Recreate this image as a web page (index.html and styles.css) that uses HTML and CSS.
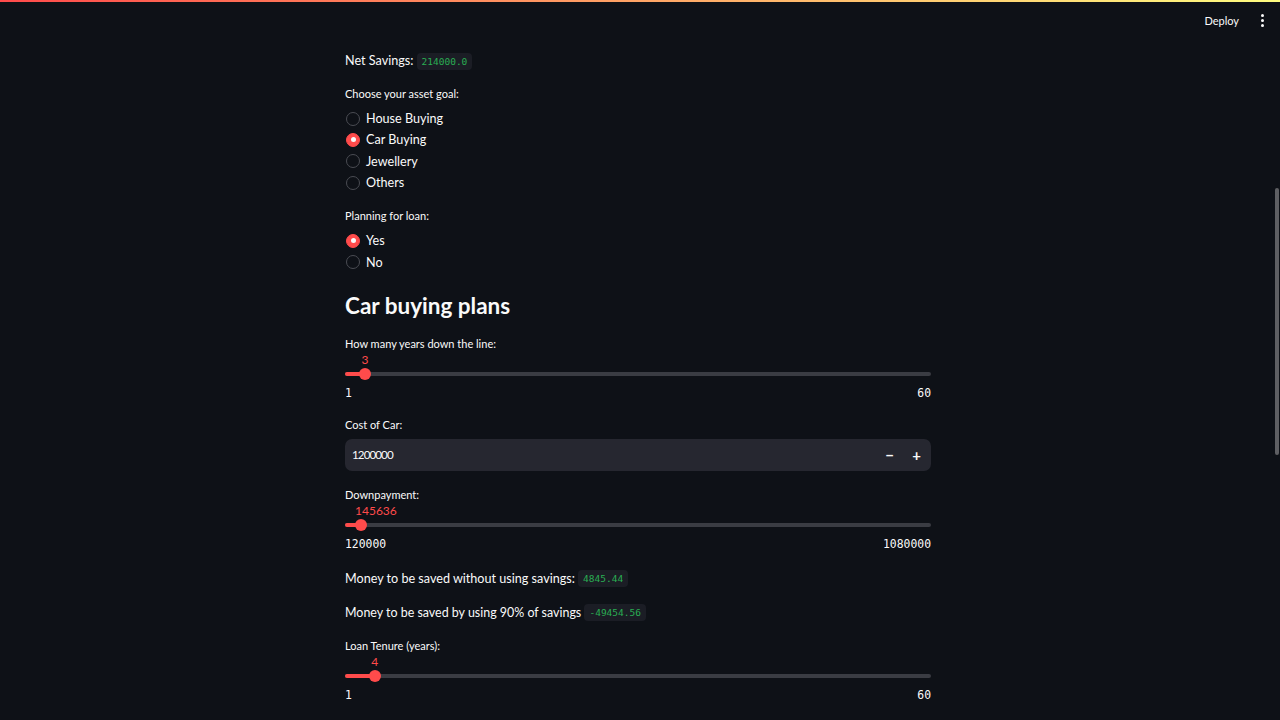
FILE: index.html
```html
<!DOCTYPE html>
<html lang="en">
<head>
<meta charset="utf-8">
<title>Asset goal planner</title>
<link rel="stylesheet" href="styles.css">
</head>
<body>
<div class="decoration"></div>
<header class="header">
  <span class="deploy">Deploy</span>
  <span class="kebab"><i></i><i></i><i></i></span>
</header>
<main class="main">
  <p class="text-line metric">Net Savings: <code class="chip">214000.0</code></p>

  <section class="radio-group first">
    <div class="label">Choose your asset goal:</div>
    <div class="radio"><span class="dot"></span><span>House Buying</span></div>
    <div class="radio"><span class="dot on"></span><span>Car Buying</span></div>
    <div class="radio"><span class="dot"></span><span>Jewellery</span></div>
    <div class="radio"><span class="dot"></span><span>Others</span></div>
  </section>

  <section class="radio-group second">
    <div class="label">Planning for loan:</div>
    <div class="radio"><span class="dot on"></span><span>Yes</span></div>
    <div class="radio"><span class="dot"></span><span>No</span></div>
  </section>

  <h2 class="heading">Car buying plans</h2>

  <section class="slider">
    <div class="label">How many years down the line:</div>
    <div class="track-area">
      <div class="track"></div>
      <div class="fill" style="width:3.39%"></div>
      <div class="thumb" style="left:3.39%"></div>
      <div class="value" style="left:3.39%">3</div>
    </div>
    <div class="ticks"><span>1</span><span>60</span></div>
  </section>

  <section class="number">
    <div class="label">Cost of Car:</div>
    <div class="input">
      <span class="input-value">1200000</span>
      <span class="step minus">&minus;</span>
      <span class="step plus">+</span>
    </div>
  </section>

  <section class="slider down">
    <div class="label">Downpayment:</div>
    <div class="track-area">
      <div class="track"></div>
      <div class="fill" style="width:2.67%"></div>
      <div class="thumb" style="left:2.67%"></div>
      <div class="value clamp">145636</div>
    </div>
    <div class="ticks"><span>120000</span><span>1080000</span></div>
  </section>

  <p class="text-line money">Money to be saved without using savings: <code class="chip">4845.44</code></p>
  <p class="text-line money2">Money to be saved by using 90% of savings <code class="chip">-49454.56</code></p>

  <section class="slider loan">
    <div class="label">Loan Tenure (years):</div>
    <div class="track-area">
      <div class="track"></div>
      <div class="fill" style="width:5.08%"></div>
      <div class="thumb" style="left:5.08%"></div>
      <div class="value" style="left:5.08%">4</div>
    </div>
    <div class="ticks"><span>1</span><span>60</span></div>
  </section>
</main>
<div class="scrollbar"><div class="scroll-thumb"></div></div>
</body>
</html>
```
FILE: styles.css
```css
* { box-sizing: border-box; }
html, body {
  margin: 0;
  padding: 0;
  height: 720px;
  overflow: hidden;
  background: #0e1117;
  color: #fafafa;
  font-family: "Lato", "Noto Sans", sans-serif;
}
.decoration {
  height: 2px;
  background: linear-gradient(90deg, #ff4b4b, #fffd80);
}
.header {
  height: 36px;
  display: flex;
  align-items: center;
  justify-content: flex-end;
  padding-right: 15px;
  gap: 20px;
}
.deploy {
  font-size: 11px;
  color: #fafafa;
}
.kebab {
  display: flex;
  flex-direction: column;
  gap: 2px;
  width: 6px;
  align-items: center;
}
.kebab i {
  display: block;
  width: 3px;
  height: 3px;
  border-radius: 50%;
  background: #fafafa;
}
.main {
  width: 586px;
  margin-left: 345px;
  padding-top: 13px;
  display: flex;
  flex-direction: column;
}
.text-line {
  margin: 0;
  height: 20px;
  line-height: 20px;
  font-size: 12.6px;
  display: flex;
  align-items: center;
  white-space: pre;
}
.money2 { font-size: 12.45px; }
.chip {
  font-family: "DejaVu Sans Mono", "Liberation Mono", monospace;
  font-size: 9.5px;
  color: #2aad53;
  background: #1b1d25;
  border-radius: 4px;
  padding: 0 5px;
  height: 17px;
  line-height: 17px;
}
.label {
  font-size: 11px;
  height: 16px;
  line-height: 16px;
}
.radio-group { display: flex; flex-direction: column; }
.radio-group.first { margin-top: 15px; }
.radio-group.second { margin-top: 15px; }
.radio-group .label { margin-bottom: 6px; }
.radio {
  height: 21.33px;
  display: flex;
  align-items: center;
  gap: 6px;
  font-size: 12.6px;
  padding-left: 1px;
}
.dot {
  width: 14px;
  height: 14px;
  border-radius: 50%;
  border: 1px solid #4a4c53;
  position: relative;
  flex: none;
}
.dot.on {
  background: #ff4b4b;
  border-color: #ff4b4b;
}
.dot.on::after {
  content: "";
  position: absolute;
  left: 50%;
  top: 50%;
  width: 5px;
  height: 5px;
  margin: -2.5px 0 0 -2.5px;
  border-radius: 50%;
  background: #fafafa;
}
.heading {
  margin: 17px 0 0;
  height: 32px;
  line-height: 32px;
  font-size: 22.5px;
  font-weight: 700;
}
.slider { display: flex; flex-direction: column; margin-top: 14px; }
.slider.down { margin-top: 16px; }
.slider.loan { margin-top: 15px; }
.track-area {
  position: relative;
  height: 27px;
  margin-top: 2px;
}
.track {
  position: absolute;
  left: 0; right: 0;
  top: 18px;
  height: 4px;
  border-radius: 2px;
  background: #3a3c43;
}
.fill {
  position: absolute;
  left: 0;
  top: 18px;
  height: 4px;
  border-radius: 2px;
  background: #ff4b4b;
}
.thumb {
  position: absolute;
  top: 14px;
  width: 12px;
  height: 12px;
  margin-left: -6px;
  border-radius: 50%;
  background: #ff4b4b;
}
.value {
  position: absolute;
  top: -1px;
  height: 14px;
  line-height: 14px;
  font-size: 12px;
  color: #ff4b4b;
  transform: translateX(-50%);
}
.value.clamp {
  left: 10px;
  transform: none;
}
.ticks {
  display: flex;
  justify-content: space-between;
  margin-top: 5px;
  height: 14px;
  line-height: 14px;
  font-family: "DejaVu Sans Mono", "Liberation Mono", monospace;
  font-size: 11.4px;
}
.number { display: flex; flex-direction: column; margin-top: 17px; }
.input {
  margin-top: 6px;
  height: 32px;
  background: #262730;
  border-radius: 7px;
  display: flex;
  align-items: center;
  padding-left: 7px;
  font-size: 11.6px;
}
.input-value { flex: 1; letter-spacing: -0.9px; }
.step {
  width: 27px;
  text-align: center;
  font-size: 15px;
  font-weight: 700;
  letter-spacing: 0;
}
.plus { margin-right: 1px; }
.money { margin-top: 18px; }
.money2 { margin-top: 14px; }
.scrollbar {
  position: fixed;
  right: 0;
  top: 0;
  width: 8px;
  height: 720px;
}
.scroll-thumb {
  position: absolute;
  right: 1px;
  top: 188px;
  width: 4px;
  height: 267px;
  background: #5e5f63;
  border-radius: 2px;
}
```
